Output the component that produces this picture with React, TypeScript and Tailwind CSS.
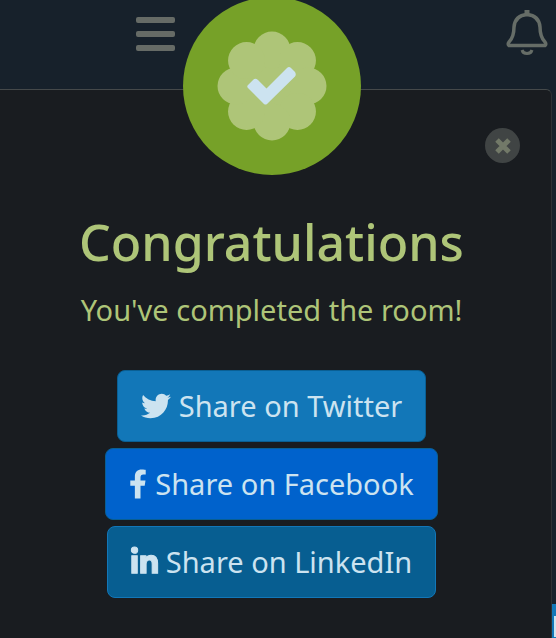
import type { ReactNode } from "react";
import { FaFacebookF, FaLinkedinIn, FaTwitter } from "react-icons/fa";

function CheckBadge() {
  const petals = [0, 45, 90, 135, 180, 225, 270, 315];
  return (
    <svg viewBox="0 0 110 110" className="size-[110px]" aria-hidden="true">
      <g fill="#aec578">
        <circle cx="55" cy="55" r="38" />
        {petals.map((angle) => (
          <circle key={angle} cx="55" cy="19" r="18.5" transform={`rotate(${angle} 55 55)`} />
        ))}
      </g>
      <path
        d="M31 54 36.500 48.500Q38.500 47 41 49L49.500 57.500 70 37Q72 35 74 37L78 41Q79.500 43.500 78 45.500L50 73Q48.500 74 47 73L31 57Q29.500 55.500 31 54Z"
        fill="#cce3f0"
      />
    </svg>
  );
}

function BellIcon() {
  return (
    <svg viewBox="0 0 42 46" className="h-[46px] w-[42px]" fill="none" stroke="#666d67" strokeLinejoin="round" aria-hidden="true">
      <path d="M3 35.500Q1.500 34 3 32 8 27 8 17 9 5.500 21 4.500 33 5.500 34 17 34 27 39 32 40.500 34 39 35.500Z" strokeWidth="3.500" />
      <path d="M21 0V5" strokeWidth="5" />
      <path d="M16 40Q17 43.500 21 43.500T26 40" strokeWidth="3" />
    </svg>
  );
}

function ShareButton({ icon, color, children }: { icon: ReactNode; color: string; children: ReactNode }) {
  return (
    <button type="button" className={`flex h-[72px] items-center gap-2 rounded-lg border px-[23px] text-[29px] leading-10 text-[#cce3f0] ${color}`}>
      {icon}
      <span>{children}</span>
    </button>
  );
}

export default function App() {
  return (
    <div className="min-h-screen overflow-hidden bg-[#17212b] font-['Noto_Sans','Open_Sans',sans-serif]">
      <header className="flex h-[89px] items-start justify-between pt-2.5 pr-2 pl-[136px]">
        <button type="button" aria-label="Menu" className="flex flex-col gap-2 pt-[7px]">
          <span className="h-1.5 w-[39px] rounded-xs bg-[#666b66]" />
          <span className="h-1.5 w-[39px] rounded-xs bg-[#666b66]" />
          <span className="h-1.5 w-[39px] rounded-xs bg-[#666b66]" />
        </button>
        <button type="button" aria-label="Notifications">
          <BellIcon />
        </button>
      </header>

      <main className="relative mr-1 flex min-h-[calc(100vh-89px)] flex-col items-center rounded-tr-md border-t border-r border-t-[#45494a] border-r-[#2c3134] bg-[#191c20] pr-2 pb-10">
        <div className="-mt-[93px] flex size-[178px] items-center justify-center rounded-full bg-[#76a128]">
          <CheckBadge />
        </div>

        <button
          type="button"
          aria-label="Close"
          className="absolute top-[38px] right-[31px] flex size-[35px] items-center justify-center rounded-full bg-[#404444]"
        >
          <svg viewBox="0 0 16 16" className="size-4" stroke="#727968" strokeWidth="5" aria-hidden="true">
            <path d="M2 2 14 14M14 2 2 14" />
          </svg>
        </button>

        <h1 className="mt-[35px] text-[50px] leading-[64px] font-medium text-[#aec578]">Congratulations</h1>
        <p className="mt-4 text-[29px] leading-10 text-[#aec578]">You've completed the room!</p>

        <div className="mt-10 flex flex-col items-center gap-1.5">
          <ShareButton color="border-[#095f94] bg-[#1277b8]" icon={<FaTwitter className="size-[30px]" />}>
            Share on Twitter
          </ShareButton>
          <ShareButton color="border-[#095f94] bg-[#0062cc]" icon={<FaFacebookF className="h-[30px] w-[18px]" />}>
            Share on Facebook
          </ShareButton>
          <ShareButton
            color="border-[#1277b8] bg-[#075e91]"
            icon={<FaLinkedinIn className="h-[30px] w-[27px] overflow-visible" stroke="currentColor" strokeWidth="18" />}
          >
            Share on LinkedIn
          </ShareButton>
        </div>
      </main>

      <div className="fixed right-0 bottom-0 h-[34px] w-1 bg-[#1277b8] pt-3 pl-0.5">
        <div className="h-[21px] bg-[#cce3f0]" />
      </div>
    </div>
  );
}
